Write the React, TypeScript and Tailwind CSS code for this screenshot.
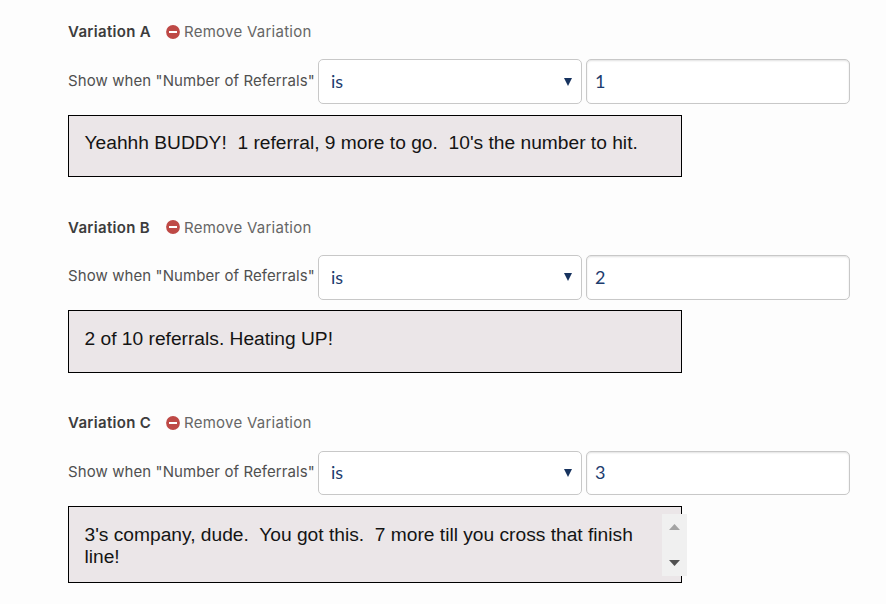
interface Variation {
  id: string;
  value: string;
  message: string;
  scrolls?: boolean;
}

const variations: Variation[] = [
  { id: 'A', value: '1', message: "Yeahhh BUDDY!  1 referral, 9 more to go.  10's the number to hit." },
  { id: 'B', value: '2', message: '2 of 10 referrals. Heating UP!' },
  {
    id: 'C',
    value: '3',
    message: "3's company, dude.  You got this.  7 more till you cross that finish line!",
    scrolls: true,
  },
];

function MinusCircle() {
  return (
    <svg className="-mt-px h-3.5 w-3.5 shrink-0" viewBox="0 0 14 14">
      <circle cx="7" cy="7" r="6.9" fill="#be4946" />
      <rect x="3" y="6" width="8" height="2" fill="#fff" />
    </svg>
  );
}

function ScrollArrows() {
  return (
    <div className="absolute left-[593px] top-[7px] flex h-[62px] w-[25px] flex-col items-center justify-between bg-[#f0f0f0] pb-[10px] pt-[10px]">
      <svg className="h-1.5 w-[11px]" viewBox="0 0 11 6">
        <path d="M5.5 0L11 6H0z" fill="#a3a3a3" />
      </svg>
      <svg className="h-1.5 w-[11px]" viewBox="0 0 11 6">
        <path d="M0 0h11L5.5 6z" fill="#505050" />
      </svg>
    </div>
  );
}

function VariationBlock({ id, value, message, scrolls }: Variation) {
  return (
    <section className="h-[195.6px]">
      {/* Title and remove link */}
      <div className="flex h-5 items-center text-[15px] leading-5">
        <h3 className="w-[98px] font-semibold tracking-[0.32px] text-[#3c3c3c]">Variation {id}</h3>
        <button className="flex items-center gap-1 tracking-[0.26px] text-[#666]">
          <MinusCircle />
          Remove Variation
        </button>
      </div>

      {/* Condition */}
      <div className="mt-[17.4px] flex h-[44.8px] gap-1">
        <label className="w-[246px] whitespace-nowrap pt-[11.4px] text-[15px] leading-5 tracking-[0.09px] text-[#505050]">
          Show when "Number of Referrals"
        </label>
        <div className="flex w-[264px] items-center justify-between rounded-[5px] border border-[#c8c8c8] bg-white pl-3 pr-[9px] font-[Lato,sans-serif] text-[18px] text-[#1d3c6e]">
          is
          <svg className="mb-[0.4px] h-2 w-2" viewBox="0 0 8 8">
            <path d="M0 0h8L4 8z" fill="#17335f" />
          </svg>
        </div>
        <div className="flex w-[264px] items-center rounded-[5px] border border-[#c8c8c8] bg-white pl-2 font-[Lato,sans-serif] text-[18px] text-[#1d3c6e] shadow-[inset_0_1px_2px_rgba(0,0,0,0.12)]">
          {value}
        </div>
      </div>

      {/* Message */}
      <div
        className={`relative mt-[10.6px] w-[614px] border border-black bg-[#ebe6e8] pl-[15.5px] font-['Liberation_Sans',sans-serif] text-[19.2px] leading-[22px] text-[#141414] ${
          scrolls ? 'h-[77px] pr-11 pt-[17.2px]' : 'h-[62.6px] pt-[16.5px]'
        }`}
      >
        <p className="whitespace-pre-wrap">{message}</p>
        {scrolls && <ScrollArrows />}
      </div>
    </section>
  );
}

export default function App() {
  return (
    <main className="h-[604px] w-[886px] overflow-hidden bg-[#fdfdfd] pl-[68px] pt-[22px] font-[Inter,sans-serif]">
      {variations.map((v) => (
        <VariationBlock key={v.id} {...v} />
      ))}
    </main>
  );
}
